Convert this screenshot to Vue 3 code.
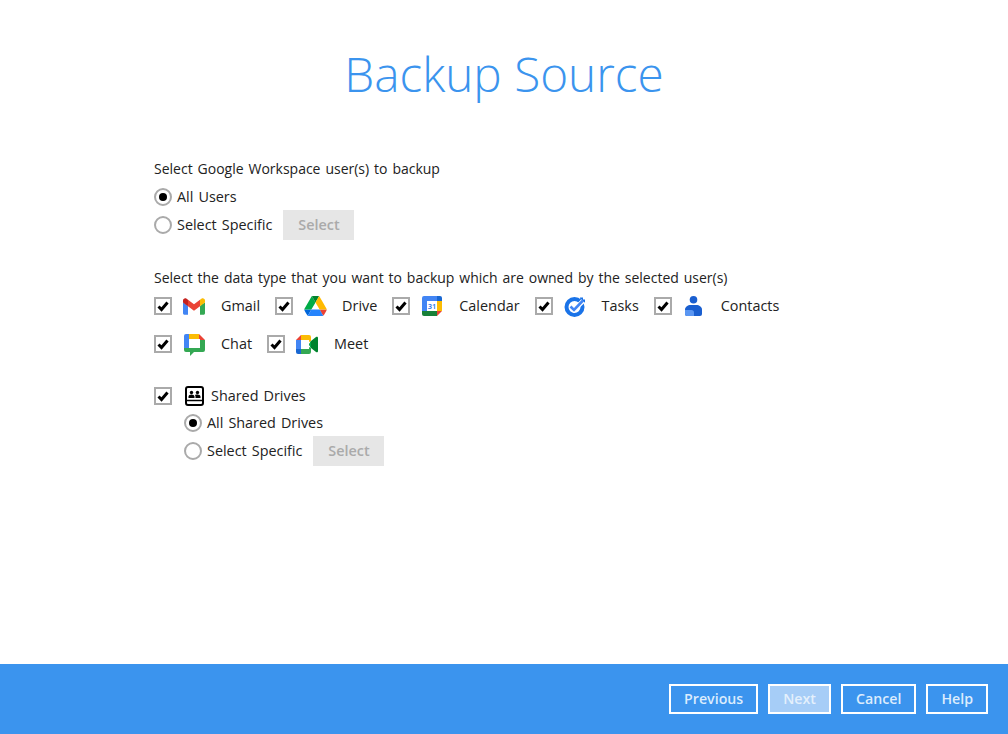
<script setup>
const users = [
  { id: 'all', label: 'All Users', checked: true, button: false },
  { id: 'specific', label: 'Select Specific', checked: false, button: true }
]
const drives = [
  { id: 'all', label: 'All Shared Drives', checked: true, button: false },
  { id: 'specific', label: 'Select Specific', checked: false, button: true }
]
const footerButtons = [
  { label: 'Previous', disabled: false },
  { label: 'Next', disabled: true },
  { label: 'Cancel', disabled: false },
  { label: 'Help', disabled: false }
]
</script>

<template>
  <div class="page">
    <main class="main">
      <h1 class="title">Backup Source</h1>
      <section class="content">
        <div class="label">Select Google Workspace user(s) to backup</div>
        <div class="radios">
          <div v-for="r in users" :key="r.id" class="radio-row">
            <span class="radio" :class="{ on: r.checked }"></span>
            <span class="txt">{{ r.label }}</span>
            <span v-if="r.button" class="select-btn">Select</span>
          </div>
        </div>

        <div class="label second">Select the data type that you want to backup which are owned by the selected user(s)</div>
        <div class="types">
          <div class="type">
            <span class="check"><svg viewBox="0 0 14 14"><path d="M2.500 7.500 5.500 10.500 11.500 3.500" /></svg></span>
            <span class="icon">
              <svg width="22" height="17" viewBox="0 0 256 193">
                <path fill="#4285F4" d="M58.182 192.05V93.14L27.507 65.077 0 49.504v125.091c0 9.658 7.825 17.455 17.455 17.455h40.727z"/>
                <path fill="#34A853" d="M197.818 192.05h40.727c9.659 0 17.455-7.826 17.455-17.455V49.505l-31.156 17.837-27.026 25.798v98.91z"/>
                <path fill="#EA4335" d="M58.182 93.14l-4.174-38.647 4.174-36.989L128 69.868l69.818-52.364 4.669 34.992-4.669 40.644L128 145.504z"/>
                <path fill="#FBBC04" d="M197.818 17.504V93.14L256 49.504V26.231c0-21.585-24.64-33.89-41.89-20.945l-16.292 12.218z"/>
                <path fill="#C5221F" d="M0 49.504l26.759 20.07L58.182 93.14V17.504L41.89 5.286C24.61-7.66 0 4.646 0 26.23v23.273z"/>
              </svg>
            </span>
            <span class="txt">Gmail</span>
          </div>
          <div class="type">
            <span class="check"><svg viewBox="0 0 14 14"><path d="M2.500 7.500 5.500 10.500 11.500 3.500" /></svg></span>
            <span class="icon">
              <svg width="23" height="20" viewBox="0 0 87.3 78">
                <path fill="#0066da" d="m6.6 66.85 3.85 6.65c.8 1.4 1.95 2.5 3.3 3.3l13.75-23.8h-27.5c0 1.55.4 3.1 1.2 4.5z"/>
                <path fill="#00ac47" d="m43.65 25-13.75-23.8c-1.35.8-2.5 1.9-3.3 3.3l-25.4 44a9.06 9.06 0 0 0 -1.2 4.5h27.5z"/>
                <path fill="#ea4335" d="m73.55 76.8c1.35-.8 2.5-1.9 3.3-3.3l1.6-2.75 7.65-13.25c.8-1.4 1.2-2.95 1.2-4.5h-27.502l5.852 11.5z"/>
                <path fill="#00832d" d="m43.65 25 13.75-23.8c-1.35-.8-2.9-1.2-4.5-1.2h-18.5c-1.6 0-3.15.45-4.5 1.2z"/>
                <path fill="#2684fc" d="m59.8 53h-32.3l-13.75 23.8c1.35.8 2.9 1.2 4.5 1.2h50.8c1.6 0 3.15-.45 4.5-1.2z"/>
                <path fill="#ffba00" d="m73.4 26.5-12.7-22c-.8-1.4-1.95-2.5-3.3-3.3l-13.75 23.8 16.15 28h27.45c0-1.55-.4-3.1-1.2-4.5z"/>
              </svg>
            </span>
            <span class="txt">Drive</span>
          </div>
          <div class="type">
            <span class="check"><svg viewBox="0 0 14 14"><path d="M2.500 7.500 5.500 10.500 11.500 3.500" /></svg></span>
            <span class="icon">
              <svg width="20" height="20" viewBox="0 0 20 20">
                <path fill="#4285f4" d="M2 0h14v5H5v10H0V2a2 2 0 0 1 2-2z"/>
                <path fill="#188038" d="M0 15h15v5H2a2 2 0 0 1-2-2z"/>
                <path fill="#fbbc04" d="M15 5h5v10h-5z"/>
                <path fill="#1967d2" d="M15 0h3a2 2 0 0 1 2 2v3h-5z"/>
                <path fill="#ea4335" d="M15 15h5l-5 5z"/>
                <rect x="5" y="5" width="10" height="10" fill="#fff"/>
                <text x="10" y="12.800" class="cal-text">31</text>
              </svg>
            </span>
            <span class="txt">Calendar</span>
          </div>
          <div class="type">
            <span class="check"><svg viewBox="0 0 14 14"><path d="M2.500 7.500 5.500 10.500 11.500 3.500" /></svg></span>
            <span class="icon">
              <svg width="22" height="21" viewBox="0 0 22 21">
                <circle cx="10.500" cy="11" r="8" fill="none" stroke="#1a73e8" stroke-width="4"/>
                <path d="M16 1.500h3v2h2v3h-3l-1.500-1.500z" fill="#1a73e8"/>
                <path d="M6.500 10.500 10 14l9-9" fill="none" stroke="#fff" stroke-width="4.600"/>
                <path d="M6.500 10.500 10 14l9-9.500" fill="none" stroke="#4285f4" stroke-width="2.600"/>
              </svg>
            </span>
            <span class="txt">Tasks</span>
          </div>
          <div class="type">
            <span class="check"><svg viewBox="0 0 14 14"><path d="M2.500 7.500 5.500 10.500 11.500 3.500" /></svg></span>
            <span class="icon">
              <svg width="17" height="20" viewBox="0 0 17 20">
                <circle cx="8.500" cy="3.800" r="3.800" fill="#1a5fd0"/>
                <path d="M5.500 9h6c2.500 0 5.500 1.800 5.500 4.500V18a2 2 0 0 1-2 2H2a2 2 0 0 1-2-2v-4.500C0 10.800 3 9 5.500 9z" fill="#1a5fd0"/>
                <path d="M0 14h6.500c1.500 0 2.500 1 2.500 2.500V20H2a2 2 0 0 1-2-2z" fill="#5a96f2"/>
              </svg>
            </span>
            <span class="txt">Contacts</span>
          </div>
          <div class="break"></div>
          <div class="type">
            <span class="check"><svg viewBox="0 0 14 14"><path d="M2.500 7.500 5.500 10.500 11.500 3.500" /></svg></span>
            <span class="icon chat-icon">
              <svg width="21" height="22" viewBox="0 0 21 22">
                <path fill="#34a853" d="M0 14h16v-8h5v10a2 2 0 0 1-2 2H10l-4 4v-4H2a2 2 0 0 1-2-2z"/>
                <path fill="#4285f4" d="M0 2a2 2 0 0 1 2-2h3v14H0z"/>
                <path fill="#fbbc04" d="M5 0h10v5H5z"/>
                <path fill="#ea4335" d="M15 0l6 6h-6z"/>
                <rect x="5" y="5" width="11" height="9" fill="#fff"/>
              </svg>
            </span>
            <span class="txt">Chat</span>
          </div>
          <div class="type">
            <span class="check"><svg viewBox="0 0 14 14"><path d="M2.500 7.500 5.500 10.500 11.500 3.500" /></svg></span>
            <span class="icon">
              <svg width="22" height="19" viewBox="0 0 22 19">
                <path fill="#ea4335" d="M5 0v5H0z"/>
                <path fill="#4285f4" d="M0 5h5v9H0z"/>
                <path fill="#1967d2" d="M0 14h5v5H2a2 2 0 0 1-2-2z"/>
                <path fill="#fbbc04" d="M5 0h8a2 2 0 0 1 2 2v4l-2 1V5H5z"/>
                <path fill="#34a853" d="M5 14h8v-2l2 1v4a2 2 0 0 1-2 2H5z"/>
                <path fill="#00832d" d="M13 9.500 15 6l5-4c1-.7 2-.2 2 1v13c0 1.200-1 1.700-2 1l-5-4z"/>
                <path fill="#00ac47" d="M13 9.500 15 6v7z"/>
                <rect x="5" y="5" width="8" height="9" fill="#fff"/>
              </svg>
            </span>
            <span class="txt">Meet</span>
          </div>
        </div>

        <div class="shared">
          <span class="check"><svg viewBox="0 0 14 14"><path d="M2.500 7.500 5.500 10.500 11.500 3.500" /></svg></span>
          <span class="icon shared-icon">
            <svg width="19" height="20" viewBox="0 0 19 20">
              <rect x="1" y="1" width="17" height="18" rx="2" fill="none" stroke="#000" stroke-width="2"/>
              <path d="M2 14.500h15" stroke="#000" stroke-width="1.500"/>
              <circle cx="6.500" cy="6.500" r="1.700" fill="#000"/>
              <circle cx="12.500" cy="6.500" r="1.700" fill="#000"/>
              <path d="M3.500 12v-1.500c0-1.300 1.500-2 3-2s3 .7 3 2V12zM10.500 12v-1.500c0-.7-.2-1.200-.6-1.600.8-.3 1.700-.4 2.600-.4 1.500 0 3 .7 3 2V12z" fill="#000"/>
            </svg>
          </span>
          <span class="txt">Shared Drives</span>
        </div>
        <div class="radios nested">
          <div v-for="r in drives" :key="r.id" class="radio-row">
            <span class="radio" :class="{ on: r.checked }"></span>
            <span class="txt">{{ r.label }}</span>
            <span v-if="r.button" class="select-btn">Select</span>
          </div>
        </div>
      </section>
    </main>
    <footer class="footer">
      <button v-for="b in footerButtons" :key="b.label" class="foot-btn" :class="{ disabled: b.disabled }" type="button">{{ b.label }}</button>
    </footer>
  </div>
</template>

<style>
html, body { margin: 0; background: #fff; }
</style>

<style scoped>
.page {
  height: 734px;
  display: flex;
  flex-direction: column;
  font-family: "Open Sans", "Liberation Sans", sans-serif;
  font-size: 14.4px;
  word-spacing: 1.3px;
  color: #222;
  overflow: hidden;
}
.main { flex: 1; padding-top: 41px; }
.title {
  margin: 0;
  height: 66px;
  line-height: 66px;
  text-align: center;
  font-size: 47.7px;
  font-weight: 300;
  word-spacing: 0;
  color: #3b94ee;
}
.content { padding: 52px 0 0 154px; }
.label { height: 20px; line-height: 20px; font-size: 14px; word-spacing: 1.27px; }
.label.second { margin-top: 29px; }
.txt { padding-bottom: 2px; white-space: nowrap; }
.radios { margin-top: 4px; }
.radios.nested { margin: 0 0 0 30px; }
.radio-row { display: flex; align-items: center; height: 28px; }
.radio {
  width: 18px;
  height: 18px;
  box-sizing: border-box;
  border: 2px solid #aaa;
  border-radius: 50%;
  margin-right: 5px;
  display: flex;
  align-items: center;
  justify-content: center;
  background: #fff;
}
.radio.on::after {
  content: "";
  width: 8px;
  height: 8px;
  border-radius: 50%;
  background: #000;
}
.select-btn {
  width: 71px;
  height: 30px;
  box-sizing: border-box;
  padding-bottom: 2px;
  margin-left: 11px;
  background: #e6e6e6;
  color: #aaa;
  font-weight: 600;
  display: flex;
  align-items: center;
  justify-content: center;
}
.types { display: flex; flex-wrap: wrap; margin-top: -1px; }
.type { display: flex; align-items: center; height: 38px; margin-right: 15px; }
.break { flex-basis: 100%; height: 0; }
.check {
  width: 18px;
  height: 18px;
  box-sizing: border-box;
  border: 2px solid #aaa;
  background: #fff;
  margin-right: 10px;
  display: flex;
  align-items: center;
  justify-content: center;
}
.check svg { width: 14px; height: 14px; }
.check path { fill: none; stroke: #000; stroke-width: 3; }
.icon {
  width: 24px;
  height: 24px;
  margin-right: 15px;
  display: flex;
  align-items: center;
  justify-content: center;
}
.chat-icon svg { margin-top: 2px; }
.cal-text {
  font-family: "Open Sans", sans-serif;
  font-size: 7.5px;
  font-weight: 600;
  fill: #1a73e8;
  text-anchor: middle;
  word-spacing: 0;
}
.shared { display: flex; align-items: center; height: 26px; margin-top: 20px; }
.shared-icon { margin-right: 5px; }
.footer {
  height: 70px;
  background: #3b94ee;
  box-sizing: border-box;
  padding: 0 20px;
  display: flex;
  align-items: center;
  justify-content: flex-end;
  gap: 10px;
}
.foot-btn {
  height: 30px;
  box-sizing: border-box;
  border: 2px solid #fff;
  background: transparent;
  padding: 0 13px 2px;
  font-family: inherit;
  font-size: 14.2px;
  font-weight: 600;
  color: #dcecfd;
}
.foot-btn.disabled { background: #a6cdf7; color: #e4f0fc; }
</style>
